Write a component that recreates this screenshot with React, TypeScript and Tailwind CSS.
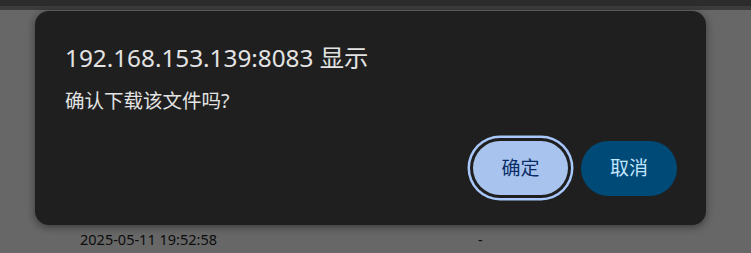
import React from "react";

const font = { fontFamily: '"Noto Sans", "Noto Sans CJK SC", sans-serif' };

export default function App() {
  return (
    <div className="relative h-[253px] w-[751px] overflow-hidden bg-[#676767]" style={font}>
      {/* dimmed page behind the dialog */}
      <div className="h-[6px] bg-[#2c2c2c]" />
      <div className="h-[4px] bg-[#3c3c3c]" />
      <div className="mt-[219px] flex text-[14.5px] leading-[20px] text-[#0c0c0c]">
        <span className="ml-[80px] w-[398px]">2025-05-11 19:52:58</span>
        <span>-</span>
      </div>

      {/* confirm dialog */}
      <div className="absolute left-[35px] top-[11px] flex h-[214px] w-[671px] flex-col rounded-[14px] bg-[#1f1f1f] pl-[30px] pr-[29px] pt-[31px] shadow-[0_2px_8px_rgba(0,0,0,0.45)]">
        <h1 className="text-[24.3px] leading-[32px] text-[#e3e3e3]">192.168.153.139:8083 显示</h1>
        <p className="mt-[14px] text-[19.5px] leading-[26px] text-[#e3e3e3]">确认下载该文件吗?</p>
        <div className="mt-auto mb-[29px] flex justify-end gap-[13px]">
          <button className="h-[54px] w-[95px] rounded-full bg-[#a8c4ee] text-[19px] text-[#0b2c66] ring-[2.5px] ring-[#a8c7fa] ring-offset-[3px] ring-offset-[#1f1f1f]">
            确定
          </button>
          <button className="h-[55px] w-[96px] rounded-full bg-[#004a77] text-[19px] text-[#c2e7ff]">
            取消
          </button>
        </div>
      </div>
    </div>
  );
}
